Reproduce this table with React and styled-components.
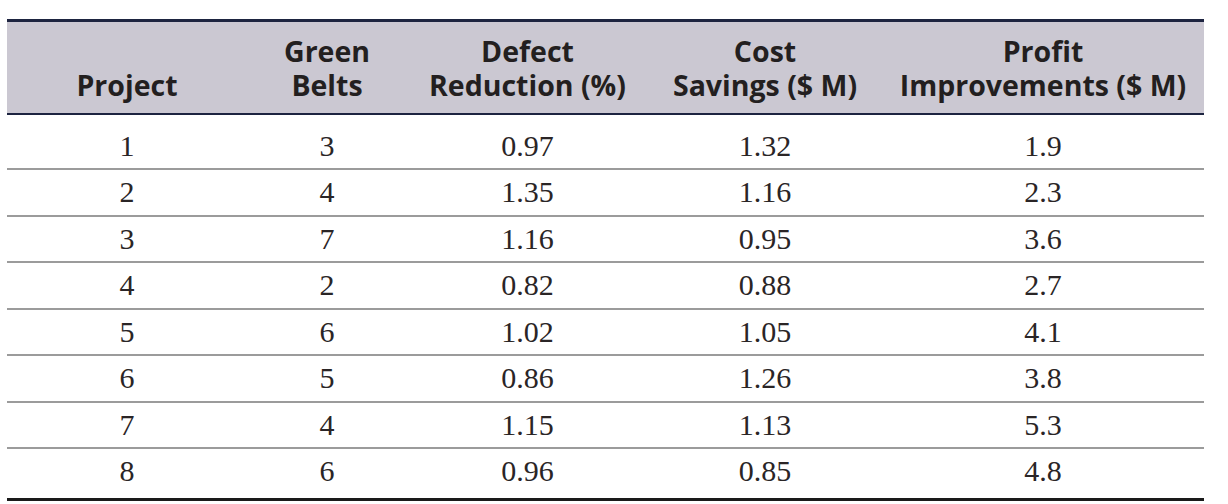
import React from 'react'
import styled, { createGlobalStyle } from 'styled-components'

const GlobalStyle = createGlobalStyle`
  html, body {
    margin: 0;
    padding: 0;
    background: #ffffff;
  }
`

const Page = styled.div`
  padding: 19px 0 0 7px;
  width: 1228px;
  height: 504px;
  box-sizing: border-box;
  overflow: hidden;
`

const Table = styled.table`
  width: 1197px;
  border-collapse: collapse;
  table-layout: fixed;
`

const HeadRow = styled.tr`
  background: #cbc8d2;
  border-top: 3px solid #1d2440;
  border-bottom: 2px solid #1d2440;
`

const HeadCell = styled.th`
  height: 93px;
  padding: 0 2px 11px;
  box-sizing: border-box;
  vertical-align: bottom;
  text-align: center;
  font-family: "Open Sans", "Liberation Sans", sans-serif;
  font-weight: 700;
  font-size: 28.5px;
  line-height: 34px;
  color: #231f20;
`

const Row = styled.tr`
  border-bottom: 2px solid #9b9b9b;

  &:first-child td {
    padding-top: 9px;
  }

  &:last-child {
    border-bottom: 3px solid #1a1a1a;
  }

  &:last-child td {
    padding-bottom: 4.5px;
  }
`

const Cell = styled.td`
  height: 44.5px;
  padding: 0;
  vertical-align: middle;
  text-align: center;
  font-family: "Liberation Serif", "Times New Roman", serif;
  font-size: 30px;
  color: #2a2526;
`

const columns = [
  { width: 240, title: ['Project'] },
  { width: 160, title: ['Green', 'Belts'] },
  { width: 241, title: ['Defect', 'Reduction (%)'] },
  { width: 234, title: ['Cost', 'Savings ($ M)'] },
  { width: 322, title: ['Profit', 'Improvements ($ M)'] },
]

const rows = [
  ['1', '3', '0.97', '1.32', '1.9'],
  ['2', '4', '1.35', '1.16', '2.3'],
  ['3', '7', '1.16', '0.95', '3.6'],
  ['4', '2', '0.82', '0.88', '2.7'],
  ['5', '6', '1.02', '1.05', '4.1'],
  ['6', '5', '0.86', '1.26', '3.8'],
  ['7', '4', '1.15', '1.13', '5.3'],
  ['8', '6', '0.96', '0.85', '4.8'],
]

export default function App() {
  return (
    <Page>
      <GlobalStyle />
      <Table>
        <colgroup>
          {columns.map((c, i) => (
            <col key={i} style={{ width: c.width }} />
          ))}
        </colgroup>
        <thead>
          <HeadRow>
            {columns.map((c, i) => (
              <HeadCell key={i}>
                {c.title.map((line, j) => (
                  <React.Fragment key={j}>
                    {j > 0 && <br />}
                    {line}
                  </React.Fragment>
                ))}
              </HeadCell>
            ))}
          </HeadRow>
        </thead>
        <tbody>
          {rows.map((r, i) => (
            <Row key={i}>
              {r.map((v, j) => (
                <Cell key={j}>{v}</Cell>
              ))}
            </Row>
          ))}
        </tbody>
      </Table>
    </Page>
  )
}
